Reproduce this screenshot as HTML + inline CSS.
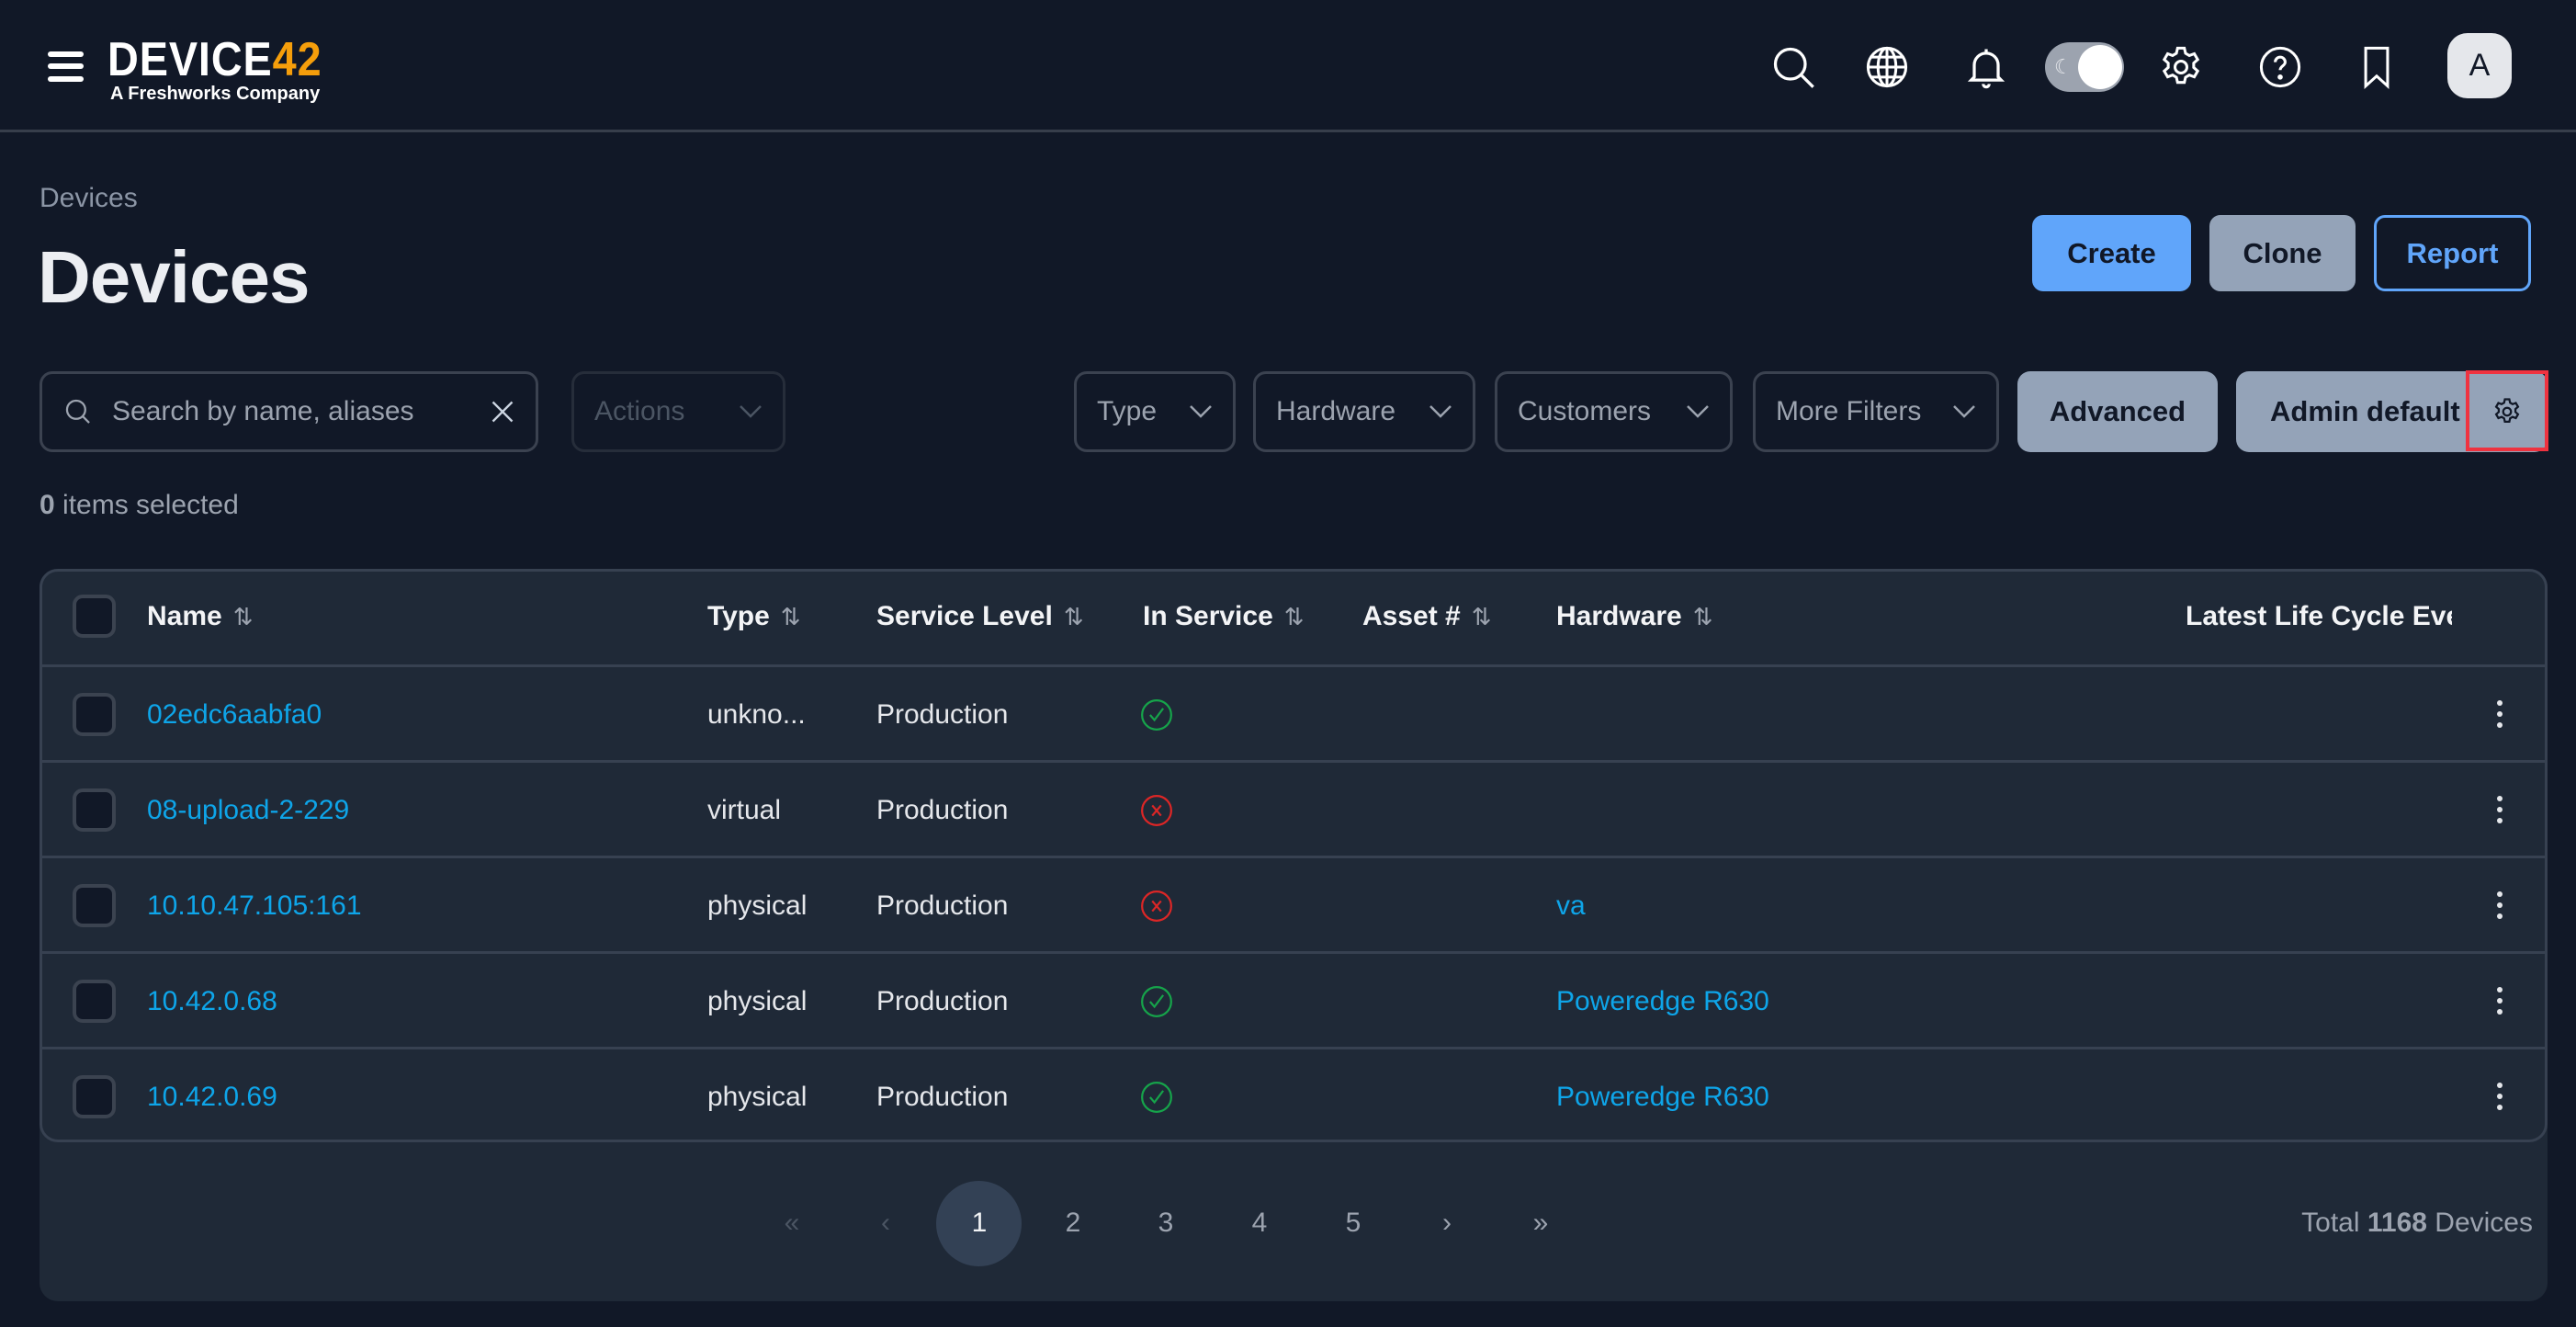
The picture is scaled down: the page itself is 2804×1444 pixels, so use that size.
<!DOCTYPE html>
<html><head><meta charset="utf-8"><style>
*{box-sizing:border-box;margin:0;padding:0}
body{width:2804px;height:1444px;background:#111827;font-family:"Liberation Sans",sans-serif;color:#e5e7eb;position:relative;overflow:hidden}
.a{position:absolute}
.hdr{left:0;top:0;width:2804px;height:144px;border-bottom:3px solid #373e4b}
.ico{position:absolute;top:47px;width:52px;height:52px}
.btn{position:absolute;top:234px;height:83px;border-radius:12px;font-size:31px;font-weight:bold;display:flex;align-items:center;justify-content:center}
.dd{position:absolute;top:404px;height:88px;border:3px solid #3b4250;border-radius:14px;font-size:30px;color:#9ca3af;display:flex;align-items:center;padding:0 22px;justify-content:space-between}
.chev{width:26px;height:16px}
.gb{position:absolute;top:404px;height:88px;background:#94a3b8;border-radius:14px;color:#111827;font-size:31px;font-weight:bold;display:flex;align-items:center}
.row{position:absolute;left:0;width:2730px;height:104px;border-top:3px solid #374151}
.cb{position:absolute;left:33px;top:28px;width:47px;height:47px;border:4px solid #3b4350;border-radius:11px;background:#111827}
.cell{position:absolute;top:0;height:104px;display:flex;align-items:center;font-size:30px;white-space:nowrap}
.lnk{color:#0ea5e9}
.th{font-weight:bold;color:#f3f4f6}
.srt{color:#9ca3af;font-weight:normal;margin-left:12px;font-size:26px}
.kb{position:absolute;left:2672px;top:36px;width:6px}
.kb i{display:block;width:6px;height:6px;border-radius:3px;background:#e5e7eb;margin-bottom:6px}
.pg{position:absolute;top:1290px;width:60px;text-align:center;font-size:30px;color:#9ca3af;line-height:82px}
</style></head><body>
<div class="a hdr"></div>
<div class="a" style="left:52px;top:56px;width:39px;height:6px;background:#fff;border-radius:3px"></div>
<div class="a" style="left:52px;top:69px;width:39px;height:6px;background:#fff;border-radius:3px"></div>
<div class="a" style="left:52px;top:83px;width:39px;height:6px;background:#fff;border-radius:3px"></div>
<div class="a" style="left:117px;top:37px;font-size:52px;font-weight:bold;color:#fff;letter-spacing:1px;transform:scaleX(0.9);transform-origin:left;line-height:56px">DEVICE<span style="color:#f59e0b">42</span></div>
<div class="a" style="left:120px;top:90px;font-size:20px;font-weight:bold;color:#fff;line-height:24px">A Freshworks Company</div>
<svg class="ico" style="left:1926px" viewBox="0 0 24 24" fill="none" stroke="#fff" stroke-width="1.5"><circle cx="10.5" cy="10.5" r="7.5"/><path d="M16 16l6 6"/></svg>
<svg class="ico" style="left:2028px" viewBox="0 0 24 24" fill="none" stroke="#fff" stroke-width="1.4"><circle cx="12" cy="12" r="9.5"/><ellipse cx="12" cy="12" rx="4.5" ry="9.5"/><path d="M2.5 12h19M4 7h16M4 17h16M12 2.5v19"/></svg>
<svg class="ico" style="left:2136px" viewBox="0 0 24 24" fill="none" stroke="#fff" stroke-width="1.5"><path d="M6 17V11a6 6 0 0112 0v6l1.5 1.5h-15z"/><path d="M12 3v2M10.5 20.5a1.5 1.5 0 003 0"/></svg>
<div class="a" style="left:2226px;top:46px;width:86px;height:54px;border-radius:27px;background:#9ca3af"></div>
<div class="a" style="left:2262px;top:49px;width:48px;height:48px;border-radius:24px;background:#fff"></div>
<div class="a" style="left:2236px;top:60px;font-size:22px;color:#e5e7eb">☾</div>
<svg class="ico" style="left:2348px" viewBox="0 0 24 24" fill="none" stroke="#fff" stroke-width="1.4"><circle cx="12" cy="12" r="3"/><path d="M10.3 2.5h3.4l.6 2.6 1.9 1.1 2.5-.9 1.7 2.9-2 1.8v2.2l2 1.8-1.7 2.9-2.5-.9-1.9 1.1-.6 2.6h-3.4l-.6-2.6-1.9-1.1-2.5.9-1.700-2.9 2-1.8v-2.2l-2-1.8 1.7-2.9 2.5.9 1.9-1.1z"/></svg>
<svg class="ico" style="left:2456px" viewBox="0 0 24 24" fill="none" stroke="#fff" stroke-width="1.4"><circle cx="12" cy="12" r="9.5"/><path d="M9.5 9.5a2.5 2.5 0 115 0c0 1.8-2.5 2-2.5 4"/><circle cx="12" cy="17" r=".6" fill="#fff"/></svg>
<svg class="ico" style="left:2561px" viewBox="0 0 24 24" fill="none" stroke="#fff" stroke-width="1.4"><path d="M6.5 2.5h11v19l-5.5-5-5.5 5z"/></svg>
<div class="a" style="left:2664px;top:36px;width:70px;height:71px;border-radius:22px;background:#e5e7eb;color:#111827;font-size:34px;display:flex;align-items:center;justify-content:center">A</div>

<div class="a" style="left:43px;top:199px;font-size:30px;color:#8b95a5">Devices</div>
<div class="a" style="left:41px;top:256px;font-size:80px;font-weight:bold;color:#eceef2;letter-spacing:-1px">Devices</div>

<div class="btn" style="left:2212px;width:173px;background:#60a5fa;color:#111827">Create</div>
<div class="btn" style="left:2405px;width:159px;background:#94a3b8;color:#111827">Clone</div>
<div class="btn" style="left:2584px;width:171px;border:3px solid #60a5fa;color:#60a5fa">Report</div>

<div class="dd" style="left:43px;width:543px;justify-content:flex-start">
<svg width="34" height="34" viewBox="0 0 24 24" fill="none" stroke="#9ca3af" stroke-width="1.6"><circle cx="10.5" cy="10.5" r="7"/><path d="M15.5 15.5l5 5"/></svg>
<span style="margin-left:20px;color:#9ca3af">Search by name, aliases</span>
<svg style="position:absolute;right:22px" width="28" height="28" viewBox="0 0 24 24" stroke="#cbd5e1" stroke-width="2"><path d="M3 3l18 18M21 3L3 21"/></svg></div>
<div class="dd" style="left:622px;width:233px;border-color:#262d3a;color:#4b5563">Actions<svg class="chev" viewBox="0 0 26 16" fill="none" stroke="#4b5563" stroke-width="2.5"><path d="M2 2l11 11L24 2"/></svg></div>
<div class="dd" style="left:1169px;width:176px">Type<svg class="chev" viewBox="0 0 26 16" fill="none" stroke="#9ca3af" stroke-width="2.5"><path d="M2 2l11 11L24 2"/></svg></div>
<div class="dd" style="left:1364px;width:242px">Hardware<svg class="chev" viewBox="0 0 26 16" fill="none" stroke="#9ca3af" stroke-width="2.5"><path d="M2 2l11 11L24 2"/></svg></div>
<div class="dd" style="left:1627px;width:259px">Customers<svg class="chev" viewBox="0 0 26 16" fill="none" stroke="#9ca3af" stroke-width="2.5"><path d="M2 2l11 11L24 2"/></svg></div>
<div class="dd" style="left:1908px;width:268px">More Filters<svg class="chev" viewBox="0 0 26 16" fill="none" stroke="#9ca3af" stroke-width="2.5"><path d="M2 2l11 11L24 2"/></svg></div>
<div class="gb" style="left:2196px;width:218px;justify-content:center">Advanced</div>
<div class="gb" style="left:2434px;width:339px;padding-left:37px">Admin default</div>
<div class="a" style="left:2684px;top:403px;width:90px;height:88px;border:4px solid #ef3340"></div>
<svg class="a" style="left:2712px;top:431px" width="34" height="34" viewBox="0 0 24 24" fill="none" stroke="#111827" stroke-width="1.6"><circle cx="12" cy="12" r="3"/><path d="M10.3 2.5h3.4l.6 2.6 1.9 1.1 2.5-.9 1.7 2.9-2 1.8v2.2l2 1.8-1.7 2.9-2.5-.9-1.9 1.1-.6 2.6h-3.4l-.6-2.6-1.9-1.1-2.5.9-1.7-2.9 2-1.8v-2.2l-2-1.8 1.7-2.9 2.5.9 1.9-1.1z"/></svg>

<div class="a" style="left:43px;top:533px;font-size:30px;color:#9ca3af"><b style="color:#9ca3af">0</b> items selected</div>

<div class="a" style="left:43px;top:619px;width:2730px;height:797px;background:#1f2937;border-radius:20px"></div>
<div class="a" style="left:43px;top:619px;width:2730px;height:624px;border:3px solid #374151;border-radius:20px;overflow:hidden">
 <div class="row" style="top:-3px;border-top:none">
  <div class="cb"></div>
  <div class="cell th" style="left:114px">Name<span class="srt">⇅</span></div>
  <div class="cell th" style="left:724px">Type<span class="srt">⇅</span></div>
  <div class="cell th" style="left:908px">Service Level<span class="srt">⇅</span></div>
  <div class="cell th" style="left:1198px">In Service<span class="srt">⇅</span></div>
  <div class="cell th" style="left:1437px">Asset #<span class="srt">⇅</span></div>
  <div class="cell th" style="left:1648px">Hardware<span class="srt">⇅</span></div>
  <div class="cell th" style="left:2333px;width:290px;overflow:hidden">Latest Life Cycle Event</div>
 </div>
 <div class="row" style="top:101px"><div class="cb"></div><div class="cell lnk" style="left:114px">02edc6aabfa0</div><div class="cell" style="left:724px">unkno...</div><div class="cell" style="left:908px">Production</div><div class="cell" style="left:1194px"><svg width="38" height="38" viewBox="0 0 24 24" fill="none" stroke="#16a34a" stroke-width="1.4"><circle cx="12" cy="12" r="10"/><path d="M7.5 12l3 3.5 6-8"/></svg></div><div class="kb"><i></i><i></i><i></i></div></div>
 <div class="row" style="top:205px"><div class="cb"></div><div class="cell lnk" style="left:114px">08-upload-2-229</div><div class="cell" style="left:724px">virtual</div><div class="cell" style="left:908px">Production</div><div class="cell" style="left:1194px"><svg width="38" height="38" viewBox="0 0 24 24" fill="none" stroke="#dc2626" stroke-width="1.4"><circle cx="12" cy="12" r="10"/><path d="M9 8.5l6 7M15 8.5l-6 7"/></svg></div><div class="kb"><i></i><i></i><i></i></div></div>
 <div class="row" style="top:309px"><div class="cb"></div><div class="cell lnk" style="left:114px">10.10.47.105:161</div><div class="cell" style="left:724px">physical</div><div class="cell" style="left:908px">Production</div><div class="cell" style="left:1194px"><svg width="38" height="38" viewBox="0 0 24 24" fill="none" stroke="#dc2626" stroke-width="1.4"><circle cx="12" cy="12" r="10"/><path d="M9 8.5l6 7M15 8.5l-6 7"/></svg></div><div class="cell lnk" style="left:1648px">va</div><div class="kb"><i></i><i></i><i></i></div></div>
 <div class="row" style="top:413px"><div class="cb"></div><div class="cell lnk" style="left:114px">10.42.0.68</div><div class="cell" style="left:724px">physical</div><div class="cell" style="left:908px">Production</div><div class="cell" style="left:1194px"><svg width="38" height="38" viewBox="0 0 24 24" fill="none" stroke="#16a34a" stroke-width="1.4"><circle cx="12" cy="12" r="10"/><path d="M7.5 12l3 3.5 6-8"/></svg></div><div class="cell lnk" style="left:1648px">Poweredge R630</div><div class="kb"><i></i><i></i><i></i></div></div>
 <div class="row" style="top:517px"><div class="cb"></div><div class="cell lnk" style="left:114px">10.42.0.69</div><div class="cell" style="left:724px">physical</div><div class="cell" style="left:908px">Production</div><div class="cell" style="left:1194px"><svg width="38" height="38" viewBox="0 0 24 24" fill="none" stroke="#16a34a" stroke-width="1.4"><circle cx="12" cy="12" r="10"/><path d="M7.5 12l3 3.5 6-8"/></svg></div><div class="cell lnk" style="left:1648px">Poweredge R630</div><div class="kb"><i></i><i></i><i></i></div></div>
</div>

<div class="pg" style="left:832px;color:#4b5563">«</div>
<div class="pg" style="left:934px;color:#4b5563">‹</div>
<div class="a" style="left:1019px;top:1285px;width:93px;height:93px;border-radius:50%;background:#334155"></div>
<div class="pg" style="left:1036px;color:#f3f4f6">1</div>
<div class="pg" style="left:1138px">2</div>
<div class="pg" style="left:1239px">3</div>
<div class="pg" style="left:1341px">4</div>
<div class="pg" style="left:1443px">5</div>
<div class="pg" style="left:1545px">›</div>
<div class="pg" style="left:1647px">»</div>
<div class="a" style="right:47px;top:1314px;font-size:30px;color:#9ca3af">Total <b>1168</b> Devices</div>
</body></html>
